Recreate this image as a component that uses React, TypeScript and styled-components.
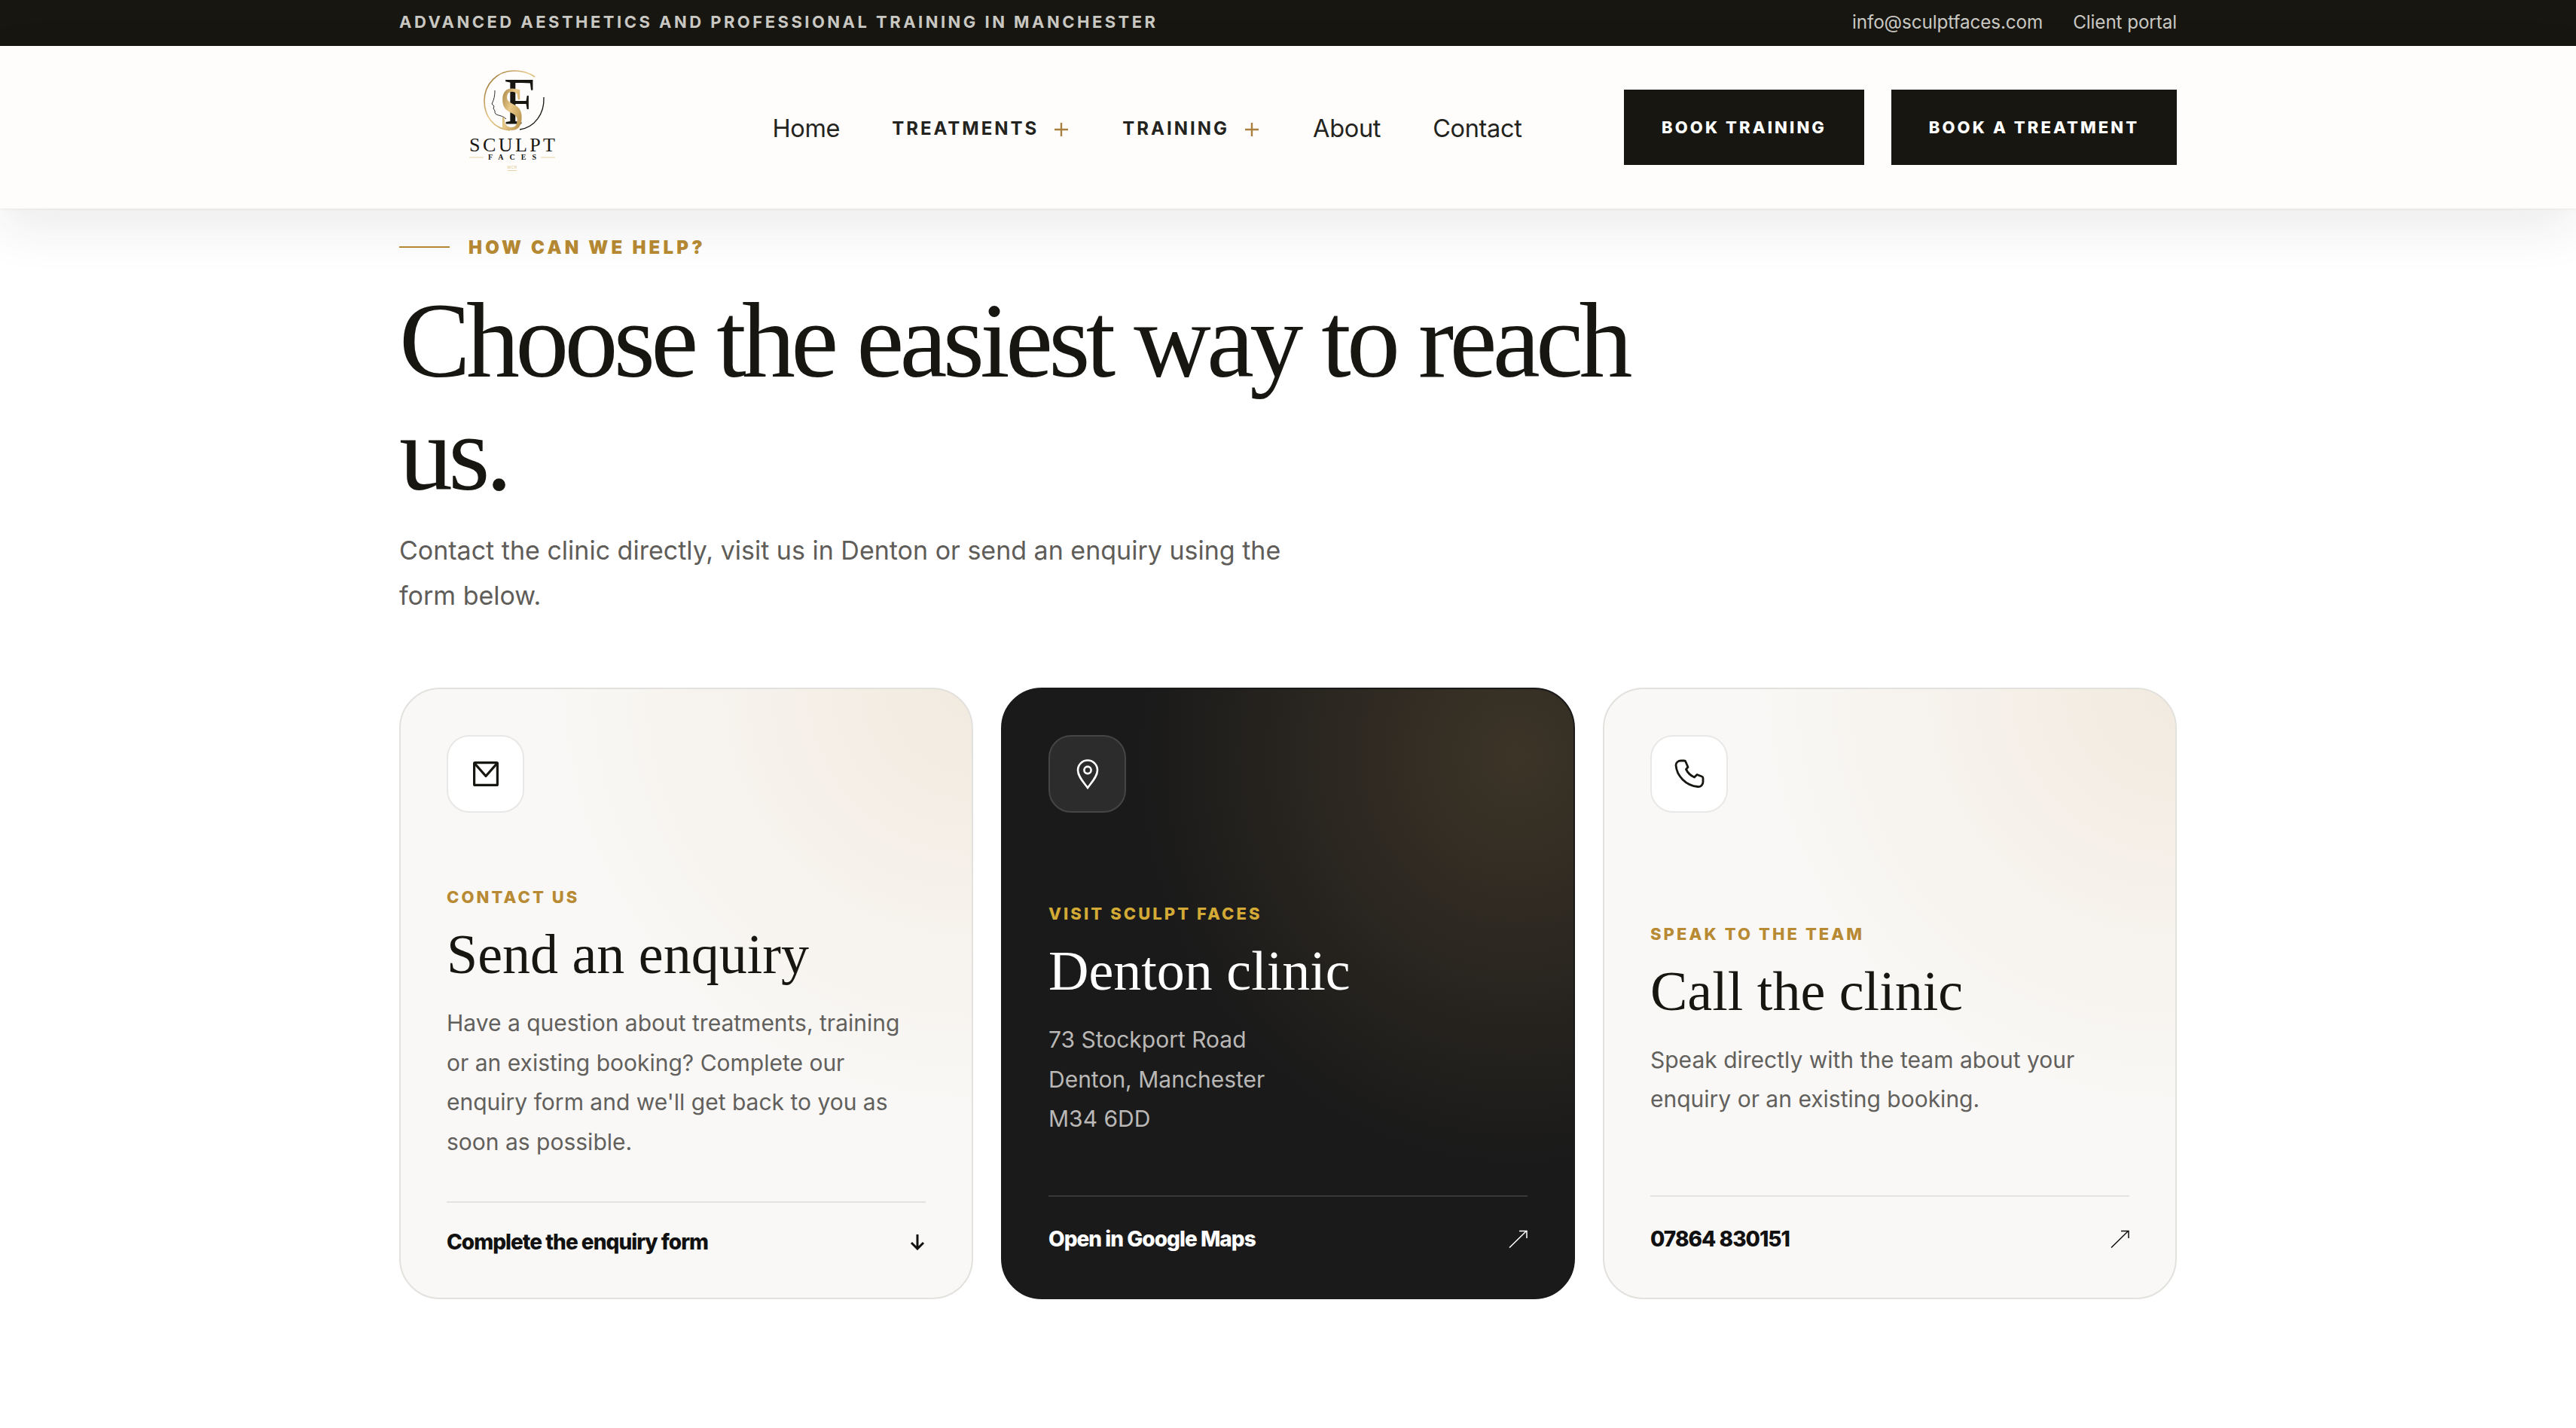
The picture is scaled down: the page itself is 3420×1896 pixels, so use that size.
import * as React from "react";
import styled, { createGlobalStyle } from "styled-components";

const INK = "#171611";
const GOLD = "#b88a33";
const SERIF = `"Liberation Serif", "Times New Roman", serif`;

const GlobalStyle = createGlobalStyle`
  * { box-sizing: border-box; }
  html, body { margin: 0; padding: 0; background: #ffffff; }
  body { font-family: Inter, "Liberation Sans", sans-serif; color: ${INK}; }
`;

const Container = styled.div`
  width: 2360px;
  margin: 0 auto;
`;

const TopBar = styled.div`
  height: 61px;
  background: ${INK};
  color: #c9c8c3;
`;

const TopBarInner = styled(Container)`
  height: 100%;
  display: flex;
  align-items: center;
  justify-content: space-between;
  padding-bottom: 4px;
`;

const Tagline = styled.span`
  font-size: 22px;
  font-weight: 700;
  letter-spacing: 0.158em;
  text-transform: uppercase;
`;

const TopLinks = styled.div`
  display: flex;
  gap: 40px;
`;

const TopLink = styled.a`
  font-size: 24.3px;
  letter-spacing: -0.005em;
`;

const Header = styled.header`
  position: relative;
  z-index: 2;
  height: 216px;
  background: #fefdfb;
  box-shadow: 0 1px 2px rgba(0, 0, 0, 0.06), 0 24px 64px rgba(30, 30, 30, 0.09);
`;

const HeaderInner = styled(Container)`
  height: 100%;
  display: flex;
  align-items: center;
  justify-content: space-between;
`;

const LogoLink = styled.a`
  display: flex;
  width: 360px;
  padding-left: 85px;
`;

const Nav = styled.nav`
  display: flex;
  align-items: center;
  gap: 69px;
  padding-top: 2px;
`;

const NavLink = styled.a`
  font-size: 32.5px;
  letter-spacing: -0.01em;
  color: #232320;
`;

const NavDrop = styled.a`
  display: flex;
  align-items: center;
  gap: 21px;
  margin-right: 3px;
  font-size: 24px;
  font-weight: 700;
  letter-spacing: 0.125em;
  color: #232320;
  text-transform: uppercase;
`;

const Plus = styled.svg`
  width: 18px;
  height: 18px;
  margin-top: 3px;
  stroke: #a9803f;
  stroke-width: 2.4;
`;

const Actions = styled.div`
  display: flex;
  gap: 36px;
`;

const BookButton = styled.a`
  height: 100px;
  display: flex;
  align-items: center;
  justify-content: center;
  width: ${(p) => p.$width}px;
  background: ${INK};
  color: #ffffff;
  font-size: 22px;
  font-weight: 800;
  letter-spacing: 0.14em;
  text-transform: uppercase;
`;

const Main = styled(Container)`
  padding-top: 33px;
  padding-bottom: 146px;
`;

const Eyebrow = styled.div`
  display: flex;
  align-items: center;
  gap: 25px;
  height: 36px;
  font-size: 24px;
  font-weight: 900;
  letter-spacing: 0.175em;
  color: ${GOLD};
  text-transform: uppercase;
  &::before {
    content: "";
    width: 67px;
    height: 2px;
    background: ${GOLD};
  }
`;

const Title = styled.h1`
  width: 1700px;
  margin: 31px 0 0;
  font-family: ${SERIF};
  font-size: 142px;
  font-weight: 400;
  line-height: 150px;
  letter-spacing: -5.75px;
  color: ${INK};
`;

const Lead = styled.p`
  width: 1240px;
  margin: 24px 0 0;
  font-size: 34px;
  line-height: 60px;
  color: #5f5d59;
`;

const Cards = styled.div`
  display: grid;
  grid-template-columns: repeat(3, 1fr);
  gap: 37px;
  margin-top: 92px;
`;

const Card = styled.article`
  height: 812px;
  display: flex;
  flex-direction: column;
  padding: 61px;
  border-radius: 54px;
  border: 2px solid ${(p) => (p.$dark ? "#1a1a1a" : "#e3e1dd")};
  background: ${(p) =>
    p.$dark
      ? "radial-gradient(ellipse 500px 540px at 90% 11%, rgba(184, 145, 85, 0.22), rgba(184, 145, 85, 0) 100%), #1a1a1a"
      : "radial-gradient(ellipse 560px 560px at 100% 0, #f2eadf, rgba(242, 234, 223, 0) 100%), #f9f8f6"};
  color: ${(p) => (p.$dark ? "#ffffff" : INK)};
`;

const IconTile = styled.div`
  flex: none;
  width: 103px;
  height: 103px;
  display: flex;
  align-items: center;
  justify-content: center;
  border-radius: 30px;
  border: 2px solid ${(p) => (p.$dark ? "#454545" : "#e9e8e6")};
  background: ${(p) => (p.$dark ? "#2c2c2c" : "#ffffff")};
  color: ${(p) => (p.$dark ? "#ffffff" : INK)};
`;

const CardBody = styled.div`
  margin: auto 0;
  padding-top: 46px;
`;

const CardLabel = styled.div`
  font-size: 22px;
  line-height: 27px;
  font-weight: 800;
  letter-spacing: 0.14em;
  color: ${(p) => (p.$dark ? "#d3aa35" : GOLD)};
  text-transform: uppercase;
`;

const CardTitle = styled.h2`
  margin: 22px 0 0;
  font-family: ${SERIF};
  font-size: 74px;
  line-height: 80px;
  font-weight: 400;
  color: ${(p) => (p.$dark ? "#ffffff" : INK)};
`;

const CardText = styled.p`
  margin: 25px 0 0;
  font-size: 30px;
  line-height: 52.5px;
  color: ${(p) => (p.$dark ? "#b9b8b6" : "#62605c")};
`;

const CardFooter = styled.a`
  display: flex;
  align-items: center;
  justify-content: space-between;
  padding-top: 39px;
  border-top: 2px solid ${(p) => (p.$dark ? "#383838" : "#e4e3e0")};
  font-size: 28px;
  line-height: 26px;
  font-weight: 800;
  letter-spacing: -0.035em;
  color: ${(p) => (p.$dark ? "#ffffff" : "#111111")};
`;

const ArrowSlot = styled.span`
  display: flex;
  align-items: center;
  height: ${(p) => p.$height}px;
  padding-right: ${(p) => p.$inset}px;
`;

const SculptLogo = () => (
  <svg width="130" height="170" viewBox="0 -5 130 170">
    <defs>
      <linearGradient id="logoGold" x1="0" y1="0" x2="1" y2="1">
        <stop offset="0" stopColor="#8a6420" />
        <stop offset="0.45" stopColor="#e8c98a" />
        <stop offset="1" stopColor="#a37a30" />
      </linearGradient>
    </defs>
    <path d="M62 84 C40 82 28 65 28 45 C28 22 46 5 67 5 C78 5 88 8 95 13" fill="none" stroke="url(#logoGold)" strokeWidth="1.6" />
    <path d="M107 40 C108 62 95 80 75 83" fill="none" stroke="#171611" strokeWidth="1.3" />
    <path d="M42 31 C42 38 41 43 38 49 L41 52 L40 55 L42 58 C41 66 50 62 57 69" fill="none" stroke="#171611" strokeWidth="0.9" />
    <text transform="translate(54 75) scale(0.84 1)" fontFamily={SERIF} fontSize="88" fill="#171611">F</text>
    <text transform="translate(49 83) scale(0.68 1)" fontFamily={SERIF} fontSize="82" fontWeight="700" fill="url(#logoGold)">S</text>
    <text x="8" y="112" textLength="114" lengthAdjust="spacing" fontFamily={SERIF} fontSize="26" fill="#171611">SCULPT</text>
    <text x="33" y="123" textLength="64" lengthAdjust="spacing" fontFamily={SERIF} fontSize="10" fontWeight="700" fill="#171611">FACES</text>
    <path d="M8 120 H27 M103 120 H122" stroke="#e6d3a8" strokeWidth="1" />
    <text x="65" y="135" textAnchor="middle" fontFamily={"Inter, sans-serif"} fontSize="5" letterSpacing="0.6" fill="#e2c88f">MCR</text>
    <path d="M59 137.5 H71" stroke="#e6d3a8" strokeWidth="1" />
  </svg>
);

const PlusIcon = () => (
  <Plus viewBox="0 0 18 18">
    <path d="M9 0 V18 M0 9 H18" />
  </Plus>
);

const MailIcon = () => (
  <svg width="34" height="33" viewBox="0 0 34 33" fill="none" stroke="currentColor" strokeWidth="3.2" strokeLinejoin="round">
    <rect x="1.6" y="1.6" width="30.8" height="29.8" rx="1" />
    <path d="M2.5 3 L17 19.5 L31.5 3" />
  </svg>
);

const PinIcon = () => (
  <svg width="30" height="40" viewBox="0 0 30 40" fill="none" stroke="currentColor" strokeWidth="2.6">
    <path d="M15 38 C10 31 2 23 2 14.5 A13 13 0 0 1 28 14.5 C28 23 20 31 15 38 Z" />
    <circle cx="15" cy="14.5" r="4.6" />
  </svg>
);

const PhoneIcon = () => (
  <svg width="40" height="39" viewBox="0 0 40 39" fill="none" stroke="currentColor" strokeWidth="2.8" strokeLinejoin="round">
    <path d="M8.7 2 H13 Q14.5 2 15 3.5 L18 10.5 L15.5 13.5 C17.5 17.5 22 22 26.5 24 L30 20.5 L36.5 23 Q38 23.5 38 25 V30 C38 34 35 37 31 36.5 C15 35 3 22 2 8 C2 4.5 5 2 8.7 2 Z" />
  </svg>
);

const ArrowDown = () => (
  <svg width="20" height="21" viewBox="0 0 20 21" fill="none" stroke="currentColor" strokeWidth="3">
    <path d="M10 0 V19 M2 11 L10 19 L18 11" />
  </svg>
);

const ArrowUpRight = () => (
  <svg width="25" height="24" viewBox="0 0 25 24" fill="none" stroke="currentColor" strokeWidth="1.5">
    <path d="M1 23.5 L24 1 M14 1.5 H24 V11" />
  </svg>
);

export default function App() {
  return (
    <>
      <GlobalStyle />
      <TopBar>
        <TopBarInner>
          <Tagline>Advanced aesthetics and professional training in Manchester</Tagline>
          <TopLinks>
            <TopLink>info@sculptfaces.com</TopLink>
            <TopLink>Client portal</TopLink>
          </TopLinks>
        </TopBarInner>
      </TopBar>
      <Header>
        <HeaderInner>
          <LogoLink>
            <SculptLogo />
          </LogoLink>
          <Nav>
            <NavLink>Home</NavLink>
            <NavDrop>
              Treatments <PlusIcon />
            </NavDrop>
            <NavDrop>
              Training <PlusIcon />
            </NavDrop>
            <NavLink>About</NavLink>
            <NavLink>Contact</NavLink>
          </Nav>
          <Actions>
            <BookButton $width={319}>Book training</BookButton>
            <BookButton $width={379}>Book a treatment</BookButton>
          </Actions>
        </HeaderInner>
      </Header>
      <Main>
        <Eyebrow>How can we help?</Eyebrow>
        <Title>Choose the easiest way to reach us.</Title>
        <Lead>
          Contact the clinic directly, visit us in Denton or send an enquiry using the form below.
        </Lead>
        <Cards>
          <Card>
            <IconTile>
              <MailIcon />
            </IconTile>
            <CardBody>
              <CardLabel>Contact us</CardLabel>
              <CardTitle>Send an enquiry</CardTitle>
              <CardText>
                Have a question about treatments, training or an existing booking? Complete our
                enquiry form and we'll get back to you as soon as possible.
              </CardText>
            </CardBody>
            <CardFooter>
              Complete the enquiry form
              <ArrowSlot $height={26} $inset={1}>
                <ArrowDown />
              </ArrowSlot>
            </CardFooter>
          </Card>
          <Card $dark>
            <IconTile $dark>
              <PinIcon />
            </IconTile>
            <CardBody>
              <CardLabel $dark>Visit Sculpt Faces</CardLabel>
              <CardTitle $dark>Denton clinic</CardTitle>
              <CardText $dark>
                73 Stockport Road
                <br />
                Denton, Manchester
                <br />
                M34 6DD
              </CardText>
            </CardBody>
            <CardFooter $dark>
              Open in Google Maps
              <ArrowSlot $height={34} $inset={0}>
                <ArrowUpRight />
              </ArrowSlot>
            </CardFooter>
          </Card>
          <Card>
            <IconTile>
              <PhoneIcon />
            </IconTile>
            <CardBody>
              <CardLabel>Speak to the team</CardLabel>
              <CardTitle>Call the clinic</CardTitle>
              <CardText>
                Speak directly with the team about your enquiry or an existing booking.
              </CardText>
            </CardBody>
            <CardFooter>
              07864 830151
              <ArrowSlot $height={34} $inset={0}>
                <ArrowUpRight />
              </ArrowSlot>
            </CardFooter>
          </Card>
        </Cards>
      </Main>
    </>
  );
}
